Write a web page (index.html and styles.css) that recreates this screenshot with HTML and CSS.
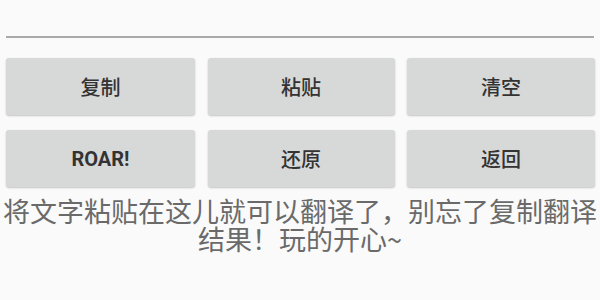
FILE: index.html
```html
<!DOCTYPE html>
<html lang="zh-CN">
<head>
<meta charset="utf-8">
<link rel="stylesheet" href="styles.css">
</head>
<body>
<div class="page">
  <div class="input-line"></div>
  <div class="buttons">
    <div class="btn">复制</div>
    <div class="btn">粘贴</div>
    <div class="btn">清空</div>
    <div class="btn latin">ROAR!</div>
    <div class="btn">还原</div>
    <div class="btn">返回</div>
  </div>
  <p class="hint">将文字粘贴在这儿就可以翻译了，别忘了复制翻译结果！玩的开心~</p>
</div>
</body>
</html>
```

FILE: styles.css
```css
html, body {
  margin: 0;
  padding: 0;
  background: #fafafa;
}
.page {
  width: 600px;
  height: 300px;
  overflow: hidden;
  font-family: "Noto Sans CJK SC", Roboto, sans-serif;
}
.input-line {
  margin: 36px 6px 0 6px;
  height: 2px;
  background: #a9a9a9;
}
.buttons {
  margin: 20px 6px 0 6px;
  display: grid;
  grid-template-columns: 189px 187px 188px;
  column-gap: 12.5px;
  row-gap: 15px;
}
.btn {
  height: 57px;
  background: #d7d8d8;
  border-radius: 3px;
  box-shadow: 0 1px 2px rgba(0,0,0,0.22);
  display: flex;
  align-items: center;
  justify-content: center;
  font-size: 20px;
  font-weight: 500;
  color: #333;
}
.btn.latin {
  font-family: Roboto, "Noto Sans CJK SC", sans-serif;
  font-weight: 700;
  font-size: 20px;
}
.hint {
  margin: 10px 0 0 0;
  padding: 0 2px;
  font-size: 27px;
  line-height: 28px;
  color: #6a6a6a;
  text-align: center;
}
```
